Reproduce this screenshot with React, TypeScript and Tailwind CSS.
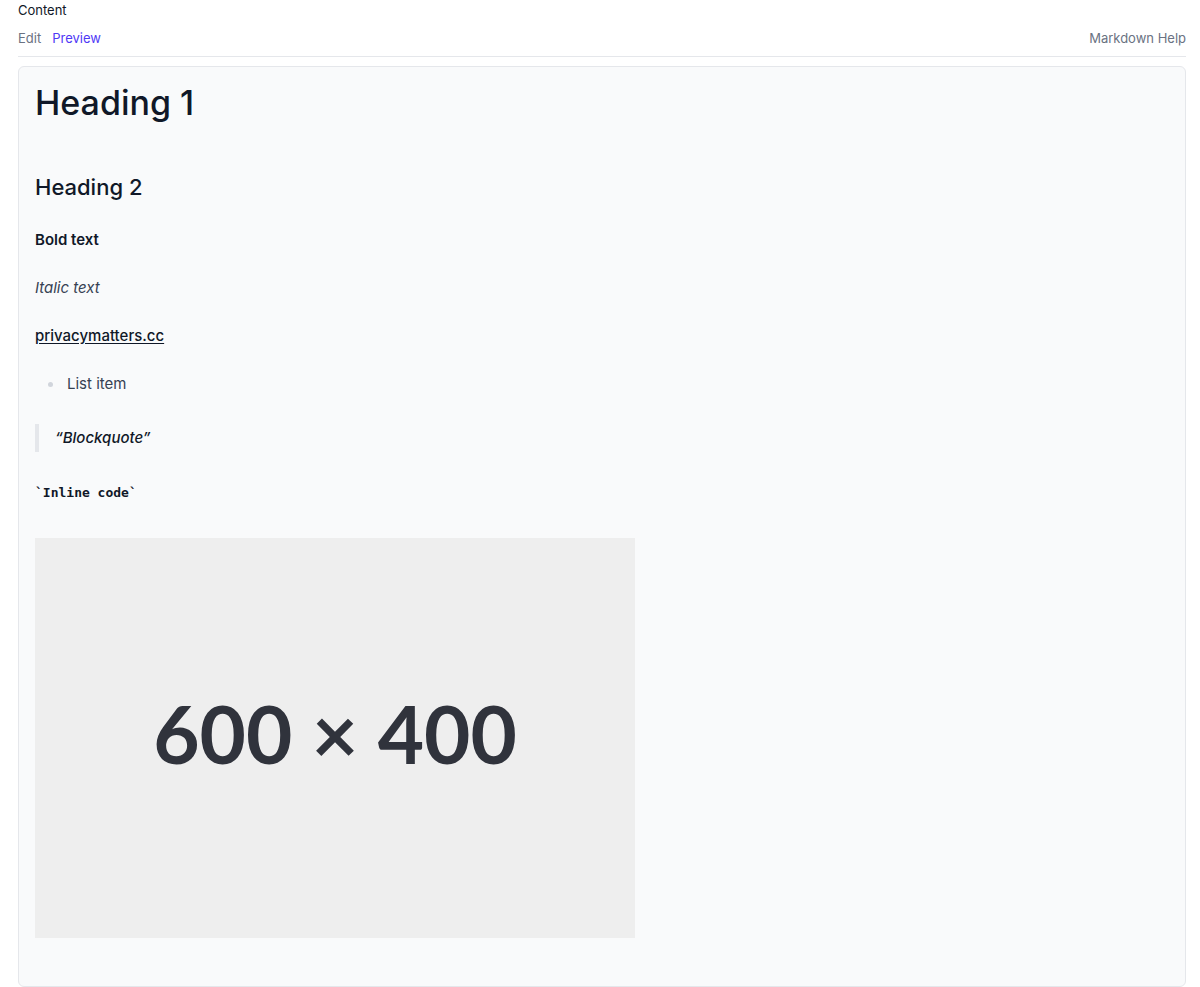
export default function App() {
  return (
    <div className="bg-white pl-[18px] pr-[14px] font-['Inter',sans-serif] text-gray-900">
      <div className="pt-[1px] text-[13px] leading-[18px] text-gray-900">Content</div>
      <div className="mt-[10px] flex items-center justify-between border-b border-gray-200 pb-[9px] text-[13px] leading-[18px]">
        <div className="flex gap-[11px]">
          <button className="text-gray-500">Edit</button>
          <button className="text-indigo-600">Preview</button>
        </div>
        <button className="text-gray-500">Markdown Help</button>
      </div>

      <div className="mt-[9px] flex flex-col items-start rounded-md border border-gray-200 bg-gray-50 px-4 pt-4 pb-4">
        <h1 className="text-[34px] leading-[40px] font-medium text-gray-900">Heading 1</h1>
        <h2 className="mt-[48px] text-[22px] leading-[32px] font-medium text-gray-900">Heading 2</h2>
        <p className="mt-[23px] text-[15px] leading-[28px] font-semibold text-gray-900">Bold text</p>
        <p className="mt-[20px] text-[15px] leading-[28px] italic text-gray-700">Italic text</p>
        <p className="mt-[20px] text-[15px] leading-[28px]">
          <a href="#" className="font-medium text-gray-900 underline underline-offset-2">privacymatters.cc</a>
        </p>
        <ul className="mt-[20px] text-[15px] leading-[28px] text-gray-700">
          <li className="flex items-center">
            <span className="ml-[13px] mr-[14px] h-[5px] w-[5px] rounded-full bg-gray-300" />
            List item
          </li>
        </ul>
        <blockquote className="mt-[26px] border-l-4 border-gray-200 pl-4 text-[15px] leading-[28px] font-medium italic text-gray-900">
          “Blockquote”
        </blockquote>
        <p className="mt-[28px] text-[14px] leading-[24px]">
          <code className="font-['DejaVu_Sans_Mono',monospace] text-[13px] font-semibold text-gray-900">`Inline code`</code>
        </p>
        <div className="mt-[33px] mb-[32px] flex h-[400px] w-[600px] items-center justify-center bg-[#eeeeee]">
          <span className="mb-[10px] font-['Lato',sans-serif] text-[80px] leading-none font-bold text-[#30333c]">600 × 400</span>
        </div>
      </div>
    </div>
  );
}
